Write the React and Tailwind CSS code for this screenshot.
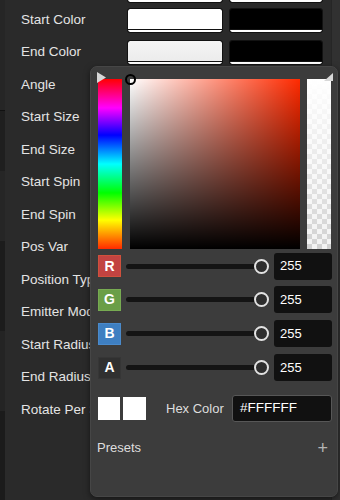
const rows = [
  { label: '', swatches: true },
  { label: 'Start Color', swatches: true },
  { label: 'End Color', swatches: true, soft: true },
  { label: 'Angle' },
  { label: 'Start Size' },
  { label: 'End Size' },
  { label: 'Start Spin' },
  { label: 'End Spin' },
  { label: 'Pos Var' },
  { label: 'Position Type' },
  { label: 'Emitter Mode' },
  { label: 'Start Radius' },
  { label: 'End Radius' },
  { label: 'Rotate Per Second' },
];

const channels = [
  { key: 'R', box: 'bg-[#c24341] border-[#d0503c]' },
  { key: 'G', box: 'bg-[#6a9e47] border-[#77ab52]' },
  { key: 'B', box: 'bg-[#3e7fc1] border-[#4a8acb]' },
  { key: 'A', box: 'bg-[#303030] border-[#363636]' },
];

function Swatch({ color, width }) {
  return (
    <div className={`${width} flex h-[25px] flex-col overflow-hidden rounded-[3px] border border-[#121212] bg-[#121212]`}>
      <div className={`flex-1 rounded-t-[2px] ${color}`} />
      <div className="mt-[1px] h-[2px] rounded-b-[2px] bg-white" />
    </div>
  );
}

function ChannelRow({ ch }) {
  return (
    <div className="flex h-[27px] items-center">
      <div
        className={`flex h-[22px] w-[23px] items-center justify-center border text-[14px] font-bold text-white ${ch.box}`}
      >
        {ch.key}
      </div>
      <div className="relative ml-[5px] h-[15px] flex-1">
        <div className="absolute left-0 right-[8px] top-[5px] h-[5px] rounded-full bg-[#141414]" />
        <div className="absolute right-[1px] top-0 h-[15px] w-[15px] rounded-full border-2 border-[#e2e2e2] bg-[#2e2e2e]" />
      </div>
      <div className="ml-[4px] flex h-[27px] w-[58px] items-center rounded-[3px] bg-[#111111] pl-[6px] text-[13px] text-white">
        255
      </div>
    </div>
  );
}

export default function App() {
  return (
    <div
      className="relative flex h-[500px] w-[340px] overflow-hidden bg-[#2a2a2a] text-[#e4e4e4]"
      style={{ fontFamily: '"Liberation Sans", Arial, sans-serif' }}
    >
      <div className="flex w-[5px] shrink-0 flex-col bg-[#1b1b1b]">
        <div className="h-[110px] bg-[#262626]" />
        <div className="h-[1px] bg-[#111]" />
        <div className="h-[60px] bg-[#1f1f1f]" />
        <div className="h-[70px] bg-[#262626]" />
        <div className="h-[90px] bg-[#1c1c1c]" />
        <div className="h-[80px] bg-[#242424]" />
      </div>

      <div className="mt-[-28.75px] flex w-[326px] shrink-0 flex-col">
        {rows.map((r, i) => (
          <div
            key={i}
            className={`flex h-[32.5px] shrink-0 ${i === 0 ? 'items-end' : 'items-center'}`}
          >
            <div className="w-[122px] shrink-0 whitespace-nowrap pl-[16px] text-[13.5px]">
              {r.label}
            </div>
            {r.swatches && (
              <div className={`flex gap-[6px] ${i === 0 ? 'mb-[1px]' : ''}`}>
                <Swatch
                  width="w-[96px]"
                  color={r.soft ? 'bg-[linear-gradient(to_bottom,#f4f4f4,#ececec)]' : 'bg-white'}
                />
                <Swatch width="w-[94px]" color="bg-black" />
              </div>
            )}
          </div>
        ))}
      </div>

      <div className="flex-1 border-l border-[#262626] bg-[#313131]" />

      <div className="absolute left-[90px] top-[66px] flex h-[431px] w-[248px] flex-col rounded-[7px] border border-[#464646] bg-[#3c3c3c] pl-[7px] pr-[5px] pt-[12px] shadow-[0_2px_6px_rgba(0,0,0,0.5)]">
        <div className="relative flex">
          <div className="h-[170px] w-[24px] bg-[linear-gradient(to_bottom,#ff0000,#ff00ff_17%,#0000ff_33%,#00ffff_50%,#00ff00_67%,#ffff00_83%,#ff2a00)]" />
          <div className="ml-[8px] h-[170px] w-[170px] bg-[linear-gradient(to_top,#000,rgba(0,0,0,0)),linear-gradient(to_right,#fff,#ff2a00)]" />
          <div className="ml-[7px] h-[170px] w-[24px] bg-[linear-gradient(to_bottom,#fff,rgba(255,255,255,0.05)),repeating-conic-gradient(#cfcfcf_0_25%,#f2f2f2_0_50%)] bg-[length:100%_100%,10px_10px]" />

          <svg className="absolute left-[-1px] top-[-7px]" width="9" height="11" viewBox="0 0 9 11">
            <path d="M0 0 L9 5.5 L0 11 Z" fill="#d8d8d8" />
          </svg>
          <svg className="absolute left-[226px] top-[-6px]" width="9" height="8" viewBox="0 0 9 8">
            <path d="M9 0 L9 8 L0 8 Z" fill="#d8d8d8" />
          </svg>
          <div className="absolute left-[27px] top-[-5px] h-[11px] w-[11px] rounded-full border-2 border-black" />
        </div>

        <div className="mt-[3.7px] flex flex-col gap-[6.8px]">
          {channels.map((ch) => (
            <ChannelRow key={ch.key} ch={ch} />
          ))}
        </div>

        <div className="mt-[14px] flex h-[27px] items-center">
          <div className="h-[23px] w-[22px] bg-white" />
          <div className="ml-[3px] h-[23px] w-[23px] bg-white" />
          <div className="ml-[20px] text-[13px] text-[#dedede]">Hex Color</div>
          <div className="ml-auto flex h-[27px] w-[100px] items-center rounded-[3px] border border-[#575757] bg-[#111111] pl-[7px] text-[13.5px] text-white">
            #FFFFFF
          </div>
        </div>

        <div className="mt-[16px] flex items-center pr-[4px] text-[13px] text-[#dedede]">
          <span className="-ml-[1px]">Presets</span>
          <span className="ml-auto text-[18px] font-light leading-none text-[#b4b4b4]">+</span>
        </div>
      </div>
    </div>
  );
}
